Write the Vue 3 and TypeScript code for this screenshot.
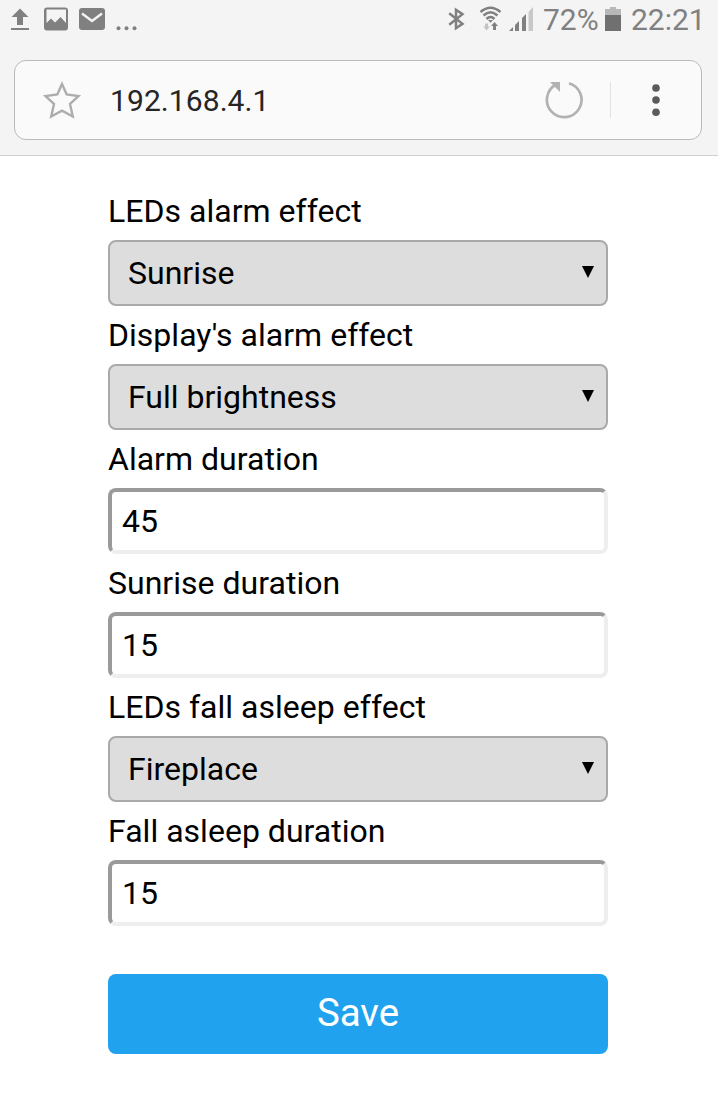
<script setup lang="ts">
import { reactive, ref } from 'vue'

interface Field {
  id: string
  label: string
  kind: 'select' | 'text'
  value: string
  options?: string[]
}

const address = ref('192.168.4.1')

const fields = reactive<Field[]>([
  { id: 'leds-alarm', label: 'LEDs alarm effect', kind: 'select', value: 'Sunrise', options: ['Sunrise'] },
  { id: 'display-alarm', label: "Display's alarm effect", kind: 'select', value: 'Full brightness', options: ['Full brightness'] },
  { id: 'alarm-duration', label: 'Alarm duration', kind: 'text', value: '45' },
  { id: 'sunrise-duration', label: 'Sunrise duration', kind: 'text', value: '15' },
  { id: 'leds-sleep', label: 'LEDs fall asleep effect', kind: 'select', value: 'Fireplace', options: ['Fireplace'] },
  { id: 'sleep-duration', label: 'Fall asleep duration', kind: 'text', value: '15' },
])
</script>

<template>
  <div class="screen">
    <header class="chrome">
      <div class="status">
        <svg class="notifications" width="140" height="40" viewBox="0 0 140 40">
          <g fill="#808080">
            <path d="M20 8.500L28.500 17H23V25H17V17H11.500Z" />
            <rect x="11" y="28" width="18" height="2" />
            <path fill-rule="evenodd" d="M47 7.500H65Q68 7.500 68 10.500V27.500Q68 30.500 65 30.500H47Q44 30.500 44 27.500V10.500Q44 7.500 47 7.500ZM46.500 9.500V23L51 18.500L55 22.500L60.500 17L66 23V9.500Z" />
            <rect x="79" y="8" width="26" height="22" rx="3" />
            <circle cx="118.500" cy="28.300" r="2" />
            <circle cx="126.500" cy="28.300" r="2" />
            <circle cx="134.500" cy="28.300" r="2" />
          </g>
          <path d="M82 13.500L92 21L102 13.500" fill="none" stroke="#f4f4f4" stroke-width="2.400" />
        </svg>
        <div class="system">
          <svg width="88" height="40" viewBox="446 0 88 40">
            <path d="M449.200 13.200L462.500 23.800L456 28.200V9.800L462.500 14.200L449.200 24.800" fill="none" stroke="#808080" stroke-width="2.500" stroke-miterlimit="8" />
            <g fill="none" stroke="#808080" stroke-width="2.500">
              <path d="M480.500 12Q490.500 3.500 500.500 12" />
              <path d="M483.500 15.500Q490.500 9 497.500 15.500" />
              <path d="M486.500 19Q490.500 15 494.500 19" />
            </g>
            <path d="M488 20H493L490.500 22.800Z" fill="#808080" />
            <path d="M485 23.500H488V26.500H490L486.500 30.500L483.500 26.500H485Z" fill="#c4c4c4" />
            <path d="M494.500 22L498 26H496V30H493V26H491Z" fill="#808080" />
            <path d="M509 31L513 27V31ZM515 25L519 21V31H515ZM522 18L526 14V31H522Z" fill="#808080" />
            <path d="M528.500 12L533 7V31H528.500Z" fill="#c8c8c8" />
          </svg>
          <span class="percent">72%</span>
          <svg class="battery" width="16" height="24" viewBox="0 0 16 24">
            <path d="M0 2H5V0H11V2H16V8H0Z" fill="#b8b8b8" />
            <rect y="8" width="16" height="16" fill="#707070" />
          </svg>
          <span class="clock">22:21</span>
        </div>
      </div>
      <div class="address-bar">
        <svg class="star" width="40" height="40" viewBox="0 0 40 40">
          <path d="M20 4L24.700 14.500L36.500 16L28 24L30.800 36.500L20 30.700L9.200 36.500L12 24L3.500 16L15.300 14.500Z" fill="none" stroke="#adadad" stroke-width="2.400" />
        </svg>
        <span class="address">{{ address }}</span>
        <svg class="reload" width="40" height="40" viewBox="0 0 40 40">
          <path d="M25 3.200A17.300 17.300 0 1 1 12.200 4.500" fill="none" stroke="#b2b2b2" stroke-width="2.700" />
          <path d="M6 2H16V12Z" fill="#b2b2b2" />
        </svg>
        <span class="divider"></span>
        <svg class="menu" width="8" height="34" viewBox="0 0 8 34">
          <g fill="#5b5b5b">
            <circle cx="4" cy="5" r="3.800" />
            <circle cx="4" cy="17" r="3.800" />
            <circle cx="4" cy="29.300" r="3.800" />
          </g>
        </svg>
      </div>
    </header>

    <form class="settings" @submit.prevent>
      <div v-for="field in fields" :key="field.id" class="field">
        <label :for="field.id">{{ field.label }}</label>
        <div v-if="field.kind === 'select'" class="select">
          <select :id="field.id" v-model="field.value">
            <option v-for="option in field.options" :key="option">{{ option }}</option>
          </select>
          <svg class="arrow" width="12" height="12" viewBox="0 0 12 12"><path d="M0 0H12L6 12Z" /></svg>
        </div>
        <input v-else :id="field.id" v-model="field.value" type="text" />
      </div>
      <button type="submit">Save</button>
    </form>
  </div>
</template>

<style>
body {
  margin: 0;
  background: #fff;
}
</style>

<style scoped>
.screen {
  width: 718px;
  height: 1093px;
  overflow: hidden;
  background: #fff;
  color: #000;
  font-family: Roboto, sans-serif;
}

.chrome {
  box-sizing: border-box;
  height: 156px;
  background: #f4f4f4;
  border-bottom: 1px solid #d0d0d0;
}

.status {
  display: flex;
  justify-content: space-between;
  height: 40px;
  padding-right: 14px;
  color: #808080;
  font-size: 30px;
  line-height: 40px;
}

.system {
  display: flex;
}

.percent {
  width: 61px;
  margin-left: 9px;
  white-space: nowrap;
}

.battery {
  margin: 7px 10px 0 1px;
}

.clock {
  width: 73px;
  white-space: nowrap;
}

.address-bar {
  box-sizing: border-box;
  display: flex;
  align-items: center;
  height: 80px;
  margin: 20px 16px 0 14px;
  padding: 0 41px 0 27px;
  border: 1px solid #bababa;
  border-radius: 12px;
  background: #fafafa;
}

.address {
  flex: 1;
  margin-left: 28px;
  padding-top: 2px;
  color: #252525;
  font-size: 30px;
  letter-spacing: 0.08px;
  line-height: 40px;
}

.divider {
  width: 1px;
  height: 36px;
  margin: 0 41px 0 26px;
  background: #e2e2e2;
}

.settings {
  display: flex;
  flex-direction: column;
  width: 500px;
  padding: 26px 0 0 108px;
}

.field {
  display: flex;
  flex-direction: column;
  height: 124px;
}

label {
  height: 58px;
  font-size: 32px;
  letter-spacing: 0.02px;
  line-height: 58px;
  white-space: nowrap;
}

.select {
  position: relative;
}

select,
input {
  box-sizing: border-box;
  display: block;
  width: 500px;
  height: 66px;
  margin: 0;
  border-radius: 8px;
  color: #000;
  font: 32px Roboto, sans-serif;
  outline: none;
}

select {
  appearance: none;
  padding: 0 40px 0 18px;
  border: 2px solid #a9a9a9;
  background: #ddd;
}

input {
  padding: 0 10px;
  border: 4px solid;
  border-color: #9a9a9a #eee #eee #9a9a9a;
  background: #fff;
}

.arrow {
  position: absolute;
  top: 26px;
  right: 14px;
  pointer-events: none;
}

button {
  height: 80px;
  margin-top: 48px;
  padding: 0 0 4px;
  border: 0;
  border-radius: 8px;
  background: #20a2ee;
  color: #fff;
  font: 38.4px Roboto, sans-serif;
}
</style>
